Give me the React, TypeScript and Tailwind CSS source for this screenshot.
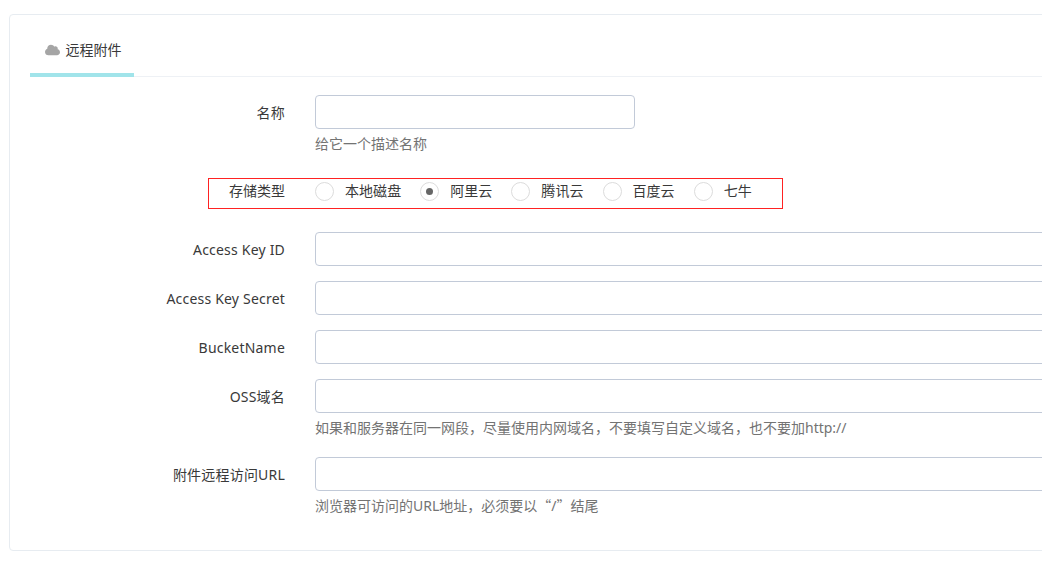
import type { ReactNode } from "react";
import { FaCloud } from "react-icons/fa";

const fontStack = "font-['Noto_Sans','Noto_Sans_CJK_SC',sans-serif]";

type FieldProps = {
  label: string;
  help?: ReactNode;
  short?: boolean;
  className?: string;
};

function Field({ label, help, short, className = "" }: FieldProps) {
  return (
    <div className={`flex ${className}`}>
      <label className="w-[275px] shrink-0 pt-[8px] text-right text-[14px] leading-[20px] tracking-[0.2px] text-[#393939]">{label}</label>
      <div className="ml-[30px] min-w-0 flex-1">
        <input
          type="text"
          className={`block h-[34px] rounded-[4px] border border-[#c2cad8] bg-white ${short ? "w-[320px]" : "w-full"}`}
        />
        {help ? <div className="mt-[5px] text-[14px] leading-[20px] text-[#737373]">{help}</div> : null}
      </div>
    </div>
  );
}

function Radio({ label, checked }: { label: string; checked?: boolean }) {
  return (
    <div className="flex items-center">
      <span className="flex h-[19px] w-[19px] items-center justify-center rounded-full border-[1.5px] border-[#dcdcdc] bg-white">
        {checked ? <span className="h-[7px] w-[7px] rounded-full bg-[#666]" /> : null}
      </span>
      <span className="ml-[11px] text-[14px] leading-[20px] tracking-[0.05px] text-[#393939]">{label}</span>
    </div>
  );
}

export default function App() {
  return (
    <div className={`h-[586px] w-[1042px] overflow-hidden bg-white ${fontStack}`}>
      <div className="ml-[9px] mt-[14px] h-[537px] w-[1100px] rounded-[4px] border border-[#e7ecf1] bg-white">
        <div className="ml-[20px] mt-[17px] flex h-[45px] border-b border-[#eef1f5]">
          <div className="-mb-px flex h-[45px] w-[104px] items-start justify-center border-b-4 border-[#a1e4ea] pl-[2px] pt-[8px] text-[14px] leading-[20px] text-[#393939]">
            <FaCloud className="mr-[6px] mt-[4px] h-[12px] w-[15px] text-[#a5a5a5]" />
            远程附件
          </div>
        </div>
        <Field label="名称" help="给它一个描述名称" short className="mt-[18px]" />
        <div className="ml-[198px] mt-[24px] flex h-[31px] w-[575px] items-start border border-[#f22] pl-[20px] pt-[2px]">
          <span className="w-[56px] text-[14px] leading-[20px] text-[#393939]">存储类型</span>
          <div className="ml-[30px] flex gap-[19px]">
            <Radio label="本地磁盘" />
            <Radio label="阿里云" checked />
            <Radio label="腾讯云" />
            <Radio label="百度云" />
            <Radio label="七牛" />
          </div>
        </div>
        <Field label="Access Key ID" className="mt-[23px]" />
        <Field label="Access Key Secret" className="mt-[15px]" />
        <Field label="BucketName" className="mt-[15px]" />
        <Field label="OSS域名" help="如果和服务器在同一网段，尽量使用内网域名，不要填写自定义域名，也不要加http://" className="mt-[15px]" />
        <Field
          label="附件远程访问URL"
          help={
            <>
              浏览器可访问的URL地址，必须要以<span className="font-['Noto_Sans_CJK_SC'] leading-none">“</span>/<span className="font-['Noto_Sans_CJK_SC'] leading-none">”</span>结尾
            </>
          }
          className="mt-[19px]"
        />
      </div>
    </div>
  );
}
